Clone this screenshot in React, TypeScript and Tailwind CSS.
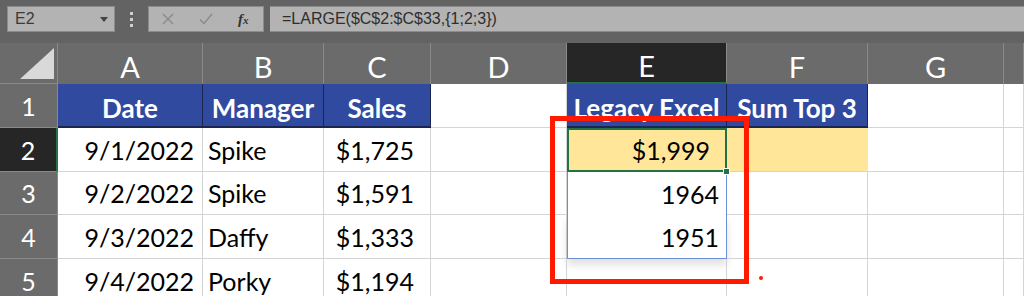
import React from 'react';

const cols = ['A', 'B', 'C', 'D', 'E', 'F', 'G', ''];

const rows = [
    { n: 2, date: '9/1/2022', mgr: 'Spike', sales: '$1,725' },
    { n: 3, date: '9/2/2022', mgr: 'Spike', sales: '$1,591' },
    { n: 4, date: '9/3/2022', mgr: 'Daffy', sales: '$1,333' },
    { n: 5, date: '9/4/2022', mgr: 'Porky', sales: '$1,194' },
];

const cellFont = { fontFamily: 'Lato, "Open Sans", sans-serif' };

function ColHeader({ label, active }: { label: string; active?: boolean }) {
    return (
        <div
            className={`flex items-center justify-center pt-[5px] border-r border-[#8a8a8a] text-[29px] leading-none text-white ${
                active ? 'bg-[#262626] border-b-2 border-b-[#217346]' : 'bg-[#6b6b6b]'
            }`}
            style={cellFont}
        >
            {label}
        </div>
    );
}

function RowHeader({ n, active }: { n: number; active?: boolean }) {
    return (
        <div
            className={`flex items-end justify-center pb-[8px] border-b border-[#8a8a8a] text-[25px] leading-none text-white ${
                active ? 'bg-[#262626] border-r-2 border-r-[#217346]' : 'bg-[#6b6b6b] border-r border-r-[#8a8a8a]'
            }`}
            style={cellFont}
        >
            {n}
        </div>
    );
}

function Cell({ children, align = 'left', className = '' }: { children?: React.ReactNode; align?: 'left' | 'right'; className?: string }) {
    return (
        <div
            className={`flex items-end pb-[8px] border-r border-b border-[#d4d4d4] text-[25px] leading-none text-black overflow-hidden whitespace-nowrap ${
                align === 'right' ? 'justify-end' : 'justify-start pl-[5px]'
            } ${className}`}
            style={cellFont}
        >
            {children}
        </div>
    );
}

function HeadCell({ children }: { children: React.ReactNode }) {
    return (
        <div
            className="flex items-end justify-center pb-[5px] bg-[#2f4a9e] border-r border-b-2 border-[#1a2550] text-[26px] font-bold leading-none text-white overflow-hidden whitespace-nowrap"
            style={cellFont}
        >
            {children}
        </div>
    );
}

export default function App() {
    return (
        <div className="relative w-[1024px] h-[296px] overflow-hidden bg-white">
            {/* formula bar */}
            <div className="h-[43px] bg-[#636363] flex items-start pt-[6px] pl-[7px]" style={{ fontFamily: '"Liberation Sans", Arial, sans-serif' }}>
                <div className="w-[108px] h-[26px] bg-[#b3b3b3] border border-[#8c8c8c] flex items-center justify-between pl-[7px] pr-[6px]">
                    <span className="text-[16px] text-[#3a3a3a]">E2</span>
                    <svg width="8" height="5" viewBox="0 0 8 5"><path d="M0 0h8L4 5z" fill="#444" /></svg>
                </div>
                <div className="w-[33px] h-[26px] flex flex-col items-center justify-center gap-[3px]">
                    <span className="w-[3px] h-[3px] bg-[#d0d0d0]" />
                    <span className="w-[3px] h-[3px] bg-[#d0d0d0]" />
                    <span className="w-[3px] h-[3px] bg-[#d0d0d0]" />
                </div>
                <div className="w-[116px] h-[26px] bg-[#b3b3b3] border border-[#8c8c8c] flex items-center">
                    <svg className="ml-[13px]" width="12" height="12" viewBox="0 0 12 12"><path d="M1 1l10 10M11 1L1 11" stroke="#8a8a8a" strokeWidth="1.4" /></svg>
                    <svg className="ml-[25px]" width="14" height="12" viewBox="0 0 14 12"><path d="M1 6.5l4 4L13 1" stroke="#8a8a8a" strokeWidth="1.4" fill="none" /></svg>
                    <span className="ml-[25px] text-[15px] italic font-bold text-[#333]" style={{ fontFamily: '"Liberation Serif", serif' }}>
                        f<span className="text-[11px]">x</span>
                    </span>
                </div>
                <div className="ml-[6px] flex-1 h-[26px] bg-[#b3b3b3] border-y border-[#8c8c8c] flex items-center pl-[12px]">
                    <span className="text-[16px] text-[#2e2e2e]">=LARGE($C$2:$C$33,{'{'}1;2;3{'}'})</span>
                </div>
            </div>

            {/* sheet */}
            <div className="grid grid-cols-[58px_145px_121px_107px_136px_160px_141px_136px_1fr] grid-rows-[41px_44px_44px_43px_44px_44px]">
                <div className="bg-[#6b6b6b] border-r border-b border-[#8a8a8a] flex items-end justify-end pr-[3px] pb-[4px]">
                    <svg width="34" height="31" viewBox="0 0 34 31"><path d="M34 0V31H0z" fill="#d9d9d9" /></svg>
                </div>
                {cols.map((c, i) => (
                    <ColHeader key={i} label={c} active={c === 'E'} />
                ))}

                <RowHeader n={1} />
                <HeadCell>Date</HeadCell>
                <HeadCell>Manager</HeadCell>
                <HeadCell>Sales</HeadCell>
                <Cell />
                <HeadCell>Legacy Excel</HeadCell>
                <HeadCell>Sum Top 3</HeadCell>
                <Cell />
                <Cell />

                {rows.map((r) => (
                    <React.Fragment key={r.n}>
                        <RowHeader n={r.n} active={r.n === 2} />
                        <Cell align="right" className="pr-[8px]">{r.date}</Cell>
                        <Cell>{r.mgr}</Cell>
                        <Cell align="right" className="pr-[16px]">{r.sales}</Cell>
                        <Cell />
                        {r.n === 2 && (
                            <div className="relative flex items-end justify-end pb-[7px] pr-[15px] bg-[#ffe699] border-2 border-[#217346] text-[25px] leading-none text-black" style={cellFont}>
                                $1,999
                                <span className="absolute -right-[5px] -bottom-[5px] w-[7px] h-[7px] bg-[#217346] border border-white" />
                            </div>
                        )}
                        {r.n === 3 && (
                            <div className="flex items-end justify-end pb-[8px] pr-[7px] border-x border-[#6b8fd6] text-[25px] leading-none text-black" style={cellFont}>
                                1964
                            </div>
                        )}
                        {r.n === 4 && (
                            <div className="flex items-end justify-end pb-[8px] pr-[7px] border-x border-b border-[#6b8fd6] shadow-[0_6px_8px_rgba(0,0,0,0.12)] text-[25px] leading-none text-black" style={cellFont}>
                                1951
                            </div>
                        )}
                        {r.n === 5 && <Cell />}
                        <Cell className={r.n === 2 ? 'bg-[#ffe699] border-r-[#ffe699]' : ''} />
                        <Cell />
                        <Cell />
                    </React.Fragment>
                ))}
            </div>

            {/* annotation */}
            <div className="absolute left-[550px] top-[116px] w-[199px] h-[168px] border-[5px] border-[#ff1a00]" />
            <div className="absolute left-[759px] top-[276px] w-[4px] h-[4px] rounded-full bg-[#ff1a00]" />
        </div>
    );
}
